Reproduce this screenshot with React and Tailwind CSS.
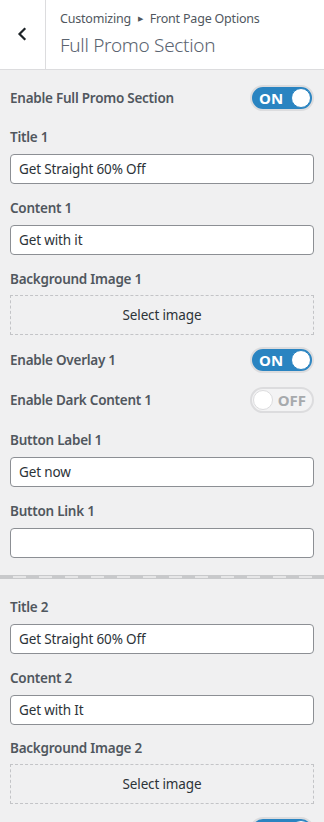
import React from "react";

const FONT = { fontFamily: '"Noto Sans", "Open Sans", sans-serif' };

function Toggle({ on }) {
  if (on) {
    return (
      <div className="w-[64px] h-[26px] rounded-full border-2 border-[#dcdcde] bg-[#2a84c1] flex items-center justify-between pl-[7px] pr-[1px]">
        <span className="text-white font-bold text-[15px] leading-none tracking-[0.2px]">ON</span>
        <span className="w-[20px] h-[20px] rounded-full bg-white border border-[#2a84c1]"></span>
      </div>
    );
  }
  return (
    <div className="w-[64px] h-[26px] rounded-full border-2 border-[#dcdcde] bg-[#f3f3f4] flex items-center justify-between pl-[1px] pr-[6px]">
      <span className="w-[20px] h-[20px] rounded-full bg-white border border-[#dcdcde]"></span>
      <span className="text-[#a7aaad] font-bold text-[15px] leading-none">OFF</span>
    </div>
  );
}

function ToggleRow({ label, on, mt }) {
  return (
    <div className={`flex items-center justify-between h-[26px] ${mt}`}>
      <span className="text-[13.5px] tracking-[-0.25px] font-semibold text-[#50575e] leading-[20px]">{label}</span>
      <Toggle on={on} />
    </div>
  );
}

function Field({ label, value, mt }) {
  return (
    <div className={mt}>
      <div className="text-[13.5px] tracking-[-0.25px] font-semibold text-[#50575e] leading-[20px] h-[20px]">{label}</div>
      <div className="mt-[7px] h-[30px] bg-white border border-[#8c8f94] rounded-[4px] px-[8px] flex items-center text-[13.5px] tracking-[-0.15px] text-[#2c3338]">
        {value}
      </div>
    </div>
  );
}

function ImageField({ label, mt }) {
  return (
    <div className={mt}>
      <div className="text-[13.5px] tracking-[-0.25px] font-semibold text-[#50575e] leading-[20px] h-[20px]">{label}</div>
      <div className="mt-[6px] h-[40px] border border-dashed border-[#c3c4c7] flex items-center justify-center text-[13.5px] tracking-[-0.15px] text-[#2c3338]">
        Select image
      </div>
    </div>
  );
}

export default function App() {
  return (
    <div className="w-[324px] h-[822px] overflow-hidden bg-[#f0f0f1]" style={FONT}>
      <div className="h-[70px] bg-white border-b border-[#dcdcde] flex">
        <div className="w-[46px] h-full border-r border-[#dcdcde] flex items-center justify-center">
          <svg width="12" height="14" viewBox="0 0 12 14" className="ml-[-1px] mt-[-2px]">
            <path d="M8.5 2 L3.5 7 L8.5 12" fill="none" stroke="#1d2327" strokeWidth="2.2" strokeLinecap="square" strokeLinejoin="miter" />
          </svg>
        </div>
        <div className="pl-[14px] pt-[9px]">
          <div className="text-[12.5px] tracking-[-0.2px] text-[#50575e] leading-[20px] flex items-center">
            Customizing
            <span className="mx-[7px] text-[7px] text-[#50575e]">&#9654;</span>
            Front Page Options
          </div>
          <div className="text-[19px] tracking-[-0.3px] font-light text-[#5b6470] leading-[26px] mt-[3px]">Full Promo Section</div>
        </div>
      </div>

      <div className="px-[10px] pt-[15px]">
        <ToggleRow label="Enable Full Promo Section" on mt="" />
        <Field label="Title 1" value="Get Straight 60% Off" mt="mt-[16px]" />
        <Field label="Content 1" value="Get with it" mt="mt-[14px]" />
        <ImageField label="Background Image 1" mt="mt-[14px]" />
        <ToggleRow label="Enable Overlay 1" on mt="mt-[12px]" />
        <ToggleRow label="Enable Dark Content 1" on={false} mt="mt-[14px]" />
        <Field label="Button Label 1" value="Get now" mt="mt-[17px]" />
        <Field label="Button Link 1" value="" mt="mt-[14px]" />
      </div>

      <div className="mt-[17px] h-[4px] border-y border-[#c8c9cb] bg-[repeating-linear-gradient(90deg,#c8c9cb_0_13px,#e6e6e7_13px_26px)]"></div>

      <div className="px-[10px] pt-[18px]">
        <Field label="Title 2" value="Get Straight 60% Off" mt="" />
        <Field label="Content 2" value="Get with It" mt="mt-[14px]" />
        <ImageField label="Background Image 2" mt="mt-[13px]" />
        <div className="mt-[13px] flex justify-end">
          <div className="w-[64px] h-[26px] rounded-full border-2 border-[#dcdcde] bg-[#2a84c1] flex items-center justify-end pr-[1px]">
            <span className="w-[20px] h-[20px] rounded-full bg-white border border-[#2a84c1]"></span>
          </div>
        </div>
      </div>
    </div>
  );
}
